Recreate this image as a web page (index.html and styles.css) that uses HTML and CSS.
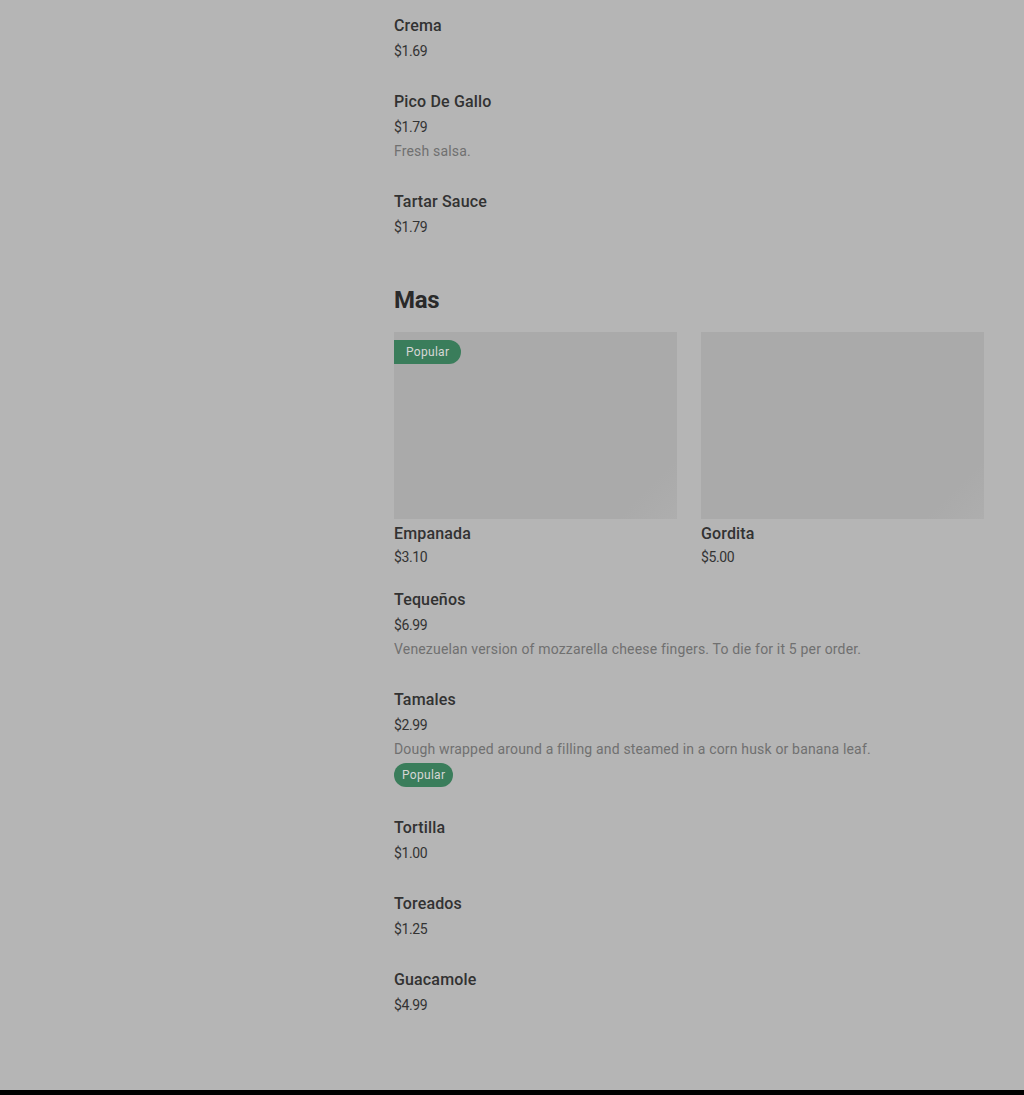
FILE: index.html
```html
<!DOCTYPE html>
<html lang="en">
<head>
  <meta charset="UTF-8" />
  <meta name="viewport" content="width=device-width, initial-scale=1.0"/>
  <title>Menu</title>
  <link rel="stylesheet" href="styles.css">
</head>
<body>
  <div class="page">
    <aside class="sidebar"></aside>
    <main class="menu">
      <ul class="item-list">
        <li class="item">
          <div class="item-title">Crema</div>
          <div class="item-price">$1.69</div>
        </li>
        <li class="item">
          <div class="item-title">Pico De Gallo</div>
          <div class="item-price">$1.79</div>
          <div class="item-desc">Fresh salsa.</div>
        </li>
        <li class="item">
          <div class="item-title">Tartar Sauce</div>
          <div class="item-price">$1.79</div>
        </li>
      </ul>

      <section class="section">
        <h2 class="section-title">Mas</h2>
        <div class="card-grid">
          <div class="card">
            <div class="card-image">
              <span class="badge badge-flag">Popular</span>
              <span class="card-fade"></span>
            </div>
            <div class="card-title">Empanada</div>
            <div class="card-price">$3.10</div>
          </div>
          <div class="card">
            <div class="card-image">
              <span class="card-fade"></span>
            </div>
            <div class="card-title">Gordita</div>
            <div class="card-price">$5.00</div>
          </div>
        </div>

        <ul class="item-list">
          <li class="item">
            <div class="item-title">Tequeños</div>
            <div class="item-price">$6.99</div>
            <div class="item-desc">Venezuelan version of mozzarella cheese fingers. To die for it 5 per order.</div>
          </li>
          <li class="item">
            <div class="item-title">Tamales</div>
            <div class="item-price">$2.99</div>
            <div class="item-desc">Dough wrapped around a filling and steamed in a corn husk or banana leaf.</div>
            <span class="badge">Popular</span>
          </li>
          <li class="item">
            <div class="item-title">Tortilla</div>
            <div class="item-price">$1.00</div>
          </li>
          <li class="item">
            <div class="item-title">Toreados</div>
            <div class="item-price">$1.25</div>
          </li>
          <li class="item">
            <div class="item-title">Guacamole</div>
            <div class="item-price">$4.99</div>
          </li>
        </ul>
      </section>
    </main>
  </div>
  <footer class="footer"></footer>
</body>
</html>
```

FILE: styles.css
```css
* { box-sizing: border-box; margin: 0; padding: 0; }
body {
  font-family: Roboto, "Liberation Sans", sans-serif;
  background: #b5b5b5;
  color: #2e2e2e;
}
.page {
  display: grid;
  grid-template-columns: 354px 590px;
  column-gap: 40px;
  height: 1090px;
  overflow: hidden;
}
ul { list-style: none; }
/* Plain list items */
.item { padding-top: 14px; padding-bottom: 13px; display: flex; flex-direction: column; align-items: flex-start; }
.item-title { font-size: 16px; line-height: 24px; font-weight: 500; color: #323232; letter-spacing: 0.15px; }
.item-price { font-size: 14px; line-height: 24px; margin-top: 1px; color: #333; letter-spacing: -0.4px; }
.item-desc { font-size: 14px; line-height: 24px; color: #707070; letter-spacing: 0.17px; }
.item .badge { margin-top: 2px; margin-bottom: 2px; }
/* Section */
.section { padding-top: 34px; }
.section-title { font-size: 24px; line-height: 28px; font-weight: 700; color: #2a2a2a; letter-spacing: -0.3px; }
.card-grid {
  display: grid;
  grid-template-columns: 283px 283px;
  column-gap: 24px;
  margin-top: 18px;
  margin-bottom: 6px;
}
.card-image {
  position: relative;
  height: 187px;
  background: #aaaaaa;
  overflow: hidden;
}
.card-fade {
  position: absolute; right: 0; bottom: 0; width: 60px; height: 60px;
  background: linear-gradient(135deg, rgba(181,181,181,0) 50%, rgba(181,181,181,0.35) 100%);
}
.card-title { font-size: 16px; line-height: 24px; font-weight: 500; color: #323232; margin-top: 3px; letter-spacing: 0.15px; }
.card-price { font-size: 14px; line-height: 22px; color: #333; letter-spacing: -0.4px; }
/* Badges */
.badge {
  display: inline-block;
  background: #3a7d5b;
  color: #d6d6d6;
  font-size: 12px;
  line-height: 24px;
  height: 24px;
  padding: 0 8px;
  border-radius: 12px;
  letter-spacing: 0.3px;
}
.badge-flag {
  position: absolute; top: 8px; left: 0;
  padding: 0 12px;
  border-radius: 0 12px 12px 0;
}
.footer { height: 5px; background: #000; }
```
